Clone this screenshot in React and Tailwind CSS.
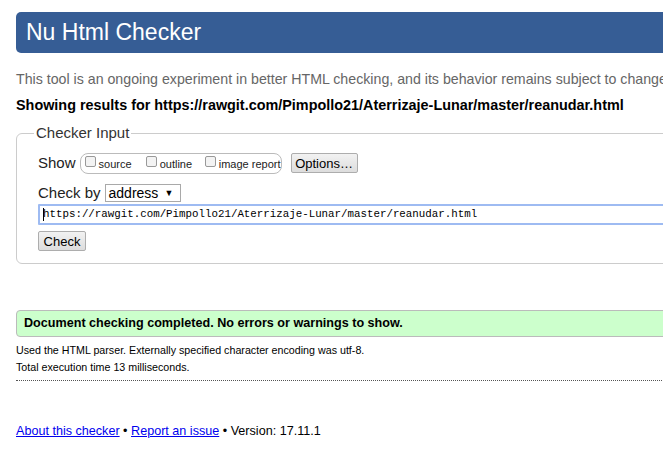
export default function App() {
  return (
    <div className="w-[663px] h-[454px] overflow-hidden bg-white font-['Liberation_Sans',Arial,sans-serif] text-[#222]">
      <div className="pl-4 pt-3">
        <div className="w-[700px] h-[41px] bg-[#365d95] rounded-l-[5px] flex items-center pl-[10px]">
          <h1 className="text-white text-[23px] leading-none">Nu Html Checker</h1>
        </div>
      </div>
      <div className="pl-4">
        <p className="mt-[17px] text-[14.2px] leading-[18px] text-[#666] whitespace-nowrap">
          This tool is an ongoing experiment in better HTML checking, and its behavior remains subject to change
        </p>
        <p className="mt-[8px] text-[14.4px] leading-[18px] font-bold text-black whitespace-nowrap">
          Showing results for https://rawgit.com/Pimpollo21/Aterrizaje-Lunar/master/reanudar.html
        </p>
        <fieldset className="mt-[10px] w-[700px] border border-[#ccc] rounded-[6px] pl-[21px] pb-[10px] pt-[2px]">
          <legend className="-ml-[4px] px-[2px] text-[15px] leading-[18px] text-[#333]">Checker Input</legend>
          <div className="flex items-center h-[20px] mt-[9px]">
            <span className="text-[15px] text-[#222]">Show</span>
            <div className="ml-[4px] h-[21px] w-[202px] border border-[#bbb] rounded-[8px] flex items-center pl-[4px] text-[11px] whitespace-nowrap">
              <span className="flex items-center w-[62px]">
                <span className="w-[11px] h-[11px] shrink-0 border border-[#999] rounded-[2px] bg-[#f3f3f3] mr-[3px] -mt-[3px]"></span>
                <span className="mt-[2px]">source</span>
              </span>
              <span className="flex items-center w-[60px]">
                <span className="w-[11px] h-[11px] shrink-0 border border-[#999] rounded-[2px] bg-[#f3f3f3] mr-[3px] -mt-[3px]"></span>
                <span className="mt-[2px]">outline</span>
              </span>
              <span className="flex items-center">
                <span className="w-[11px] h-[11px] shrink-0 border border-[#999] rounded-[2px] bg-[#f3f3f3] mr-[3px] -mt-[3px]"></span>
                <span className="mt-[2px]">image report</span>
              </span>
            </div>
            <button className="ml-[9px] h-[20px] w-[67px] border border-[#adadad] rounded-[2px] bg-gradient-to-b from-[#f2f2f2] to-[#dddddd] text-[13px] text-black leading-none">
              Options…
            </button>
          </div>
          <div className="flex items-center mt-[11px] h-[18px]">
            <span className="text-[15px] text-[#222]">Check by</span>
            <div className="ml-[4px] h-[18px] w-[76px] border border-[#a9a9a9] flex items-center justify-between pl-[3px] pr-[6px] text-[14px] text-black">
              <span className="leading-none">address</span>
              <span className="text-[9px] leading-none">▼</span>
            </div>
          </div>
          <div className="mt-[2px] h-[21px] w-[660px] border-2 border-[#9ebbf2] rounded-[1px] flex items-center pl-[3px] font-['Liberation_Mono',monospace] text-[10.8px] text-black">
            <span className="w-px h-[13px] bg-black mr-[-1px]"></span>
            https://rawgit.com/Pimpollo21/Aterrizaje-Lunar/master/reanudar.html
          </div>
          <button className="mt-[6px] h-[20px] w-[48px] border border-[#adadad] rounded-[2px] bg-gradient-to-b from-[#f2f2f2] to-[#dddddd] text-[13px] text-black leading-none">
            Check
          </button>
        </fieldset>
        <div className="mt-[46px] w-[700px] h-[27px] bg-[#ccffcc] border border-[#bbb] rounded-[4px] flex items-center pl-[7px]">
          <span className="text-[12.6px] font-bold text-black">Document checking completed. No errors or warnings to show.</span>
        </div>
        <p className="mt-[5px] text-[10.7px] leading-[17px] text-black">
          Used the HTML parser. Externally specified character encoding was utf-8.
        </p>
        <p className="text-[10.7px] leading-[17px] text-black">Total execution time 13 milliseconds.</p>
        <div className="mt-[4px] w-[700px] border-t border-dotted border-[#555]"></div>
        <p className="mt-[41px] text-[12.6px] text-black">
          <a href="#" className="text-[#0000ee] underline">About this checker</a>
          {" • "}
          <a href="#" className="text-[#0000ee] underline">Report an issue</a>
          {" • Version: 17.11.1"}
        </p>
      </div>
    </div>
  );
}
